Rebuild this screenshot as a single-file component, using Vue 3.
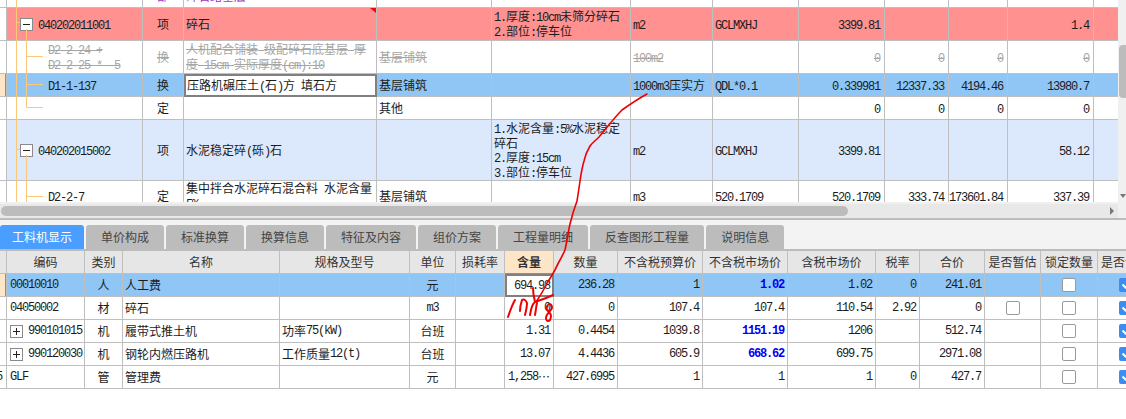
<script setup>
// split a string into latin / cjk runs, the latin part is set tighter to get half width digits
function runs(text) {
  return String(text)
    .split(/([\x20-\x7e]+)/)
    .filter(Boolean)
    .map((s) => ({ s, lat: /^[\x20-\x7e]/.test(s) }))
}

const upperAlign = ['c', 'l', 'l', 'l', 'l', 'l', 'r', 'r', 'r', 'r']

const upperRows = [
  { id: 0, cls: 'clip', h: 8, code: '', cells: ['部', '碎石路基层', '', '', '', '', '', '', '', ''] },
  {
    id: 1, cls: 'red', h: 33, code: '040202011001', box: true, flag: true,
    cells: ['项', '碎石', '', '1.厚度:10cm未筛分碎石\n2.部位:停车位', 'm2', 'GCLMXHJ', '3399.81', '', '', '1.4']
  },
  {
    id: 2, cls: 'off', h: 33, code: 'D2-2-24 +\nD2-2-25 * -5',
    cells: ['换', '人机配合铺装 级配碎石底基层 厚度 15cm  实际厚度(cm):10', '基层铺筑', '', '100m2', '', '0', '0', '0', '0']
  },
  {
    id: 3, cls: 'sel', h: 23, code: 'D1-1-137', edit: true,
    cells: ['换', '压路机碾压土(石)方 填石方', '基层铺筑', '', '1000m3压实方', 'QDL*0.1', '0.339981', '12337.33', '4194.46', '13980.7']
  },
  { id: 4, h: 23, code: '', cells: ['定', '', '其他', '', '', '', '0', '0', '0', '0'] },
  {
    id: 5, cls: 'blue', h: 61, code: '040202015002', box: true,
    cells: ['项', '水泥稳定碎(砾)石', '', '1.水泥含量:5%水泥稳定碎石\n2.厚度:15cm\n3.部位:停车位', 'm2', 'GCLMXHJ', '3399.81', '', '', '58.12']
  },
  {
    id: 6, h: 31, code: 'D2-2-7',
    cells: ['定', '集中拌合水泥碎石混合料 水泥含量 5%', '基层铺筑', '', 'm3', '520.1709', '520.1709', '333.74', '173601.84', '337.39']
  }
]

const tabs = ['工料机显示', '单价构成', '标准换算', '换算信息', '特征及内容', '组价方案', '工程量明细', '反查图形工程量', '说明信息']

const heads = ['编码', '类别', '名称', '规格及型号', '单位', '损耗率', '含量', '数量', '不含税预算价', '不含税市场价', '含税市场价', '税率', '合价', '是否暂估', '锁定数量', '是否计价']

const lowerAlign = ['c', 'l', 'l', 'c', 'l', 'r', 'r', 'r', 'r', 'r', 'r', 'r']

const lowerRows = [
  { id: 1, sel: true, code: '00010010', strong: true, cells: ['人', '人工费', '', '元', '', '694.98', '236.28', '1', '1.02', '1.02', '0', '241.01'] },
  { id: 2, code: '04050002', est: true, cells: ['材', '碎石', '', 'm3', '', '0', '0', '107.4', '107.4', '110.54', '2.92', '0'] },
  { id: 3, code: '990101015', box: true, strong: true, cells: ['机', '履带式推土机', '功率75(kW)', '台班', '', '1.31', '0.4454', '1039.8', '1151.19', '1206', '', '512.74'] },
  { id: 4, code: '990120030', box: true, strong: true, cells: ['机', '钢轮内燃压路机', '工作质量12(t)', '台班', '', '13.07', '4.4436', '605.9', '668.62', '699.75', '', '2971.08'] },
  { id: 5, code: 'GLF', num: '5', cells: ['管', '管理费', '', '元', '', '1,258…', '427.6995', '1', '1', '1', '0', '427.7'] }
]
</script>

<template>
  <div class="page">
    <div class="top">
      <div class="top-main">
        <div class="utable">
          <div
            v-for="row in upperRows"
            :key="row.id"
            class="urow"
            :class="row.cls"
            :style="{ height: row.h + 'px' }"
          >
            <div class="gut"></div>
            <div class="ucell code" :class="{ plain: !row.box }">
              <span v-if="row.box" class="box minus"></span>
              <div class="txt"><span v-for="(r, i) in runs(row.code)" :key="i" :class="{ lat: r.lat }">{{ r.s }}</span></div>
            </div>
            <div
              v-for="(c, n) in row.cells"
              :key="n"
              class="ucell"
              :class="[upperAlign[n], { editing: row.edit && n === 1 }]"
            >
              <div class="txt"><span v-for="(r, i) in runs(c)" :key="i" :class="{ lat: r.lat }">{{ r.s }}</span></div>
              <i v-if="row.flag && n === 1" class="flag"></i>
            </div>
            <div class="ucell tail"></div>
          </div>

          <!-- tree connectors -->
          <svg class="tree" width="50" height="202" viewBox="0 0 50 202">
            <g fill="none" stroke="#fcc878" stroke-width="1">
              <path d="M16.5 0V202M17 22.5H20M17 149.5H20" />
              <path d="M26.5 29V107.5H43M27 56.5H43M27 84.5H43" />
              <path d="M26.5 155V202M27 196.5H43" />
            </g>
          </svg>
        </div>
        <div class="hbar">
          <div class="hthumb"></div>
          <i class="arrow-r"></i>
        </div>
      </div>
      <div class="vbar">
        <div class="vthumb"></div>
        <i class="arrow-d"></i>
      </div>
    </div>

    <div class="tabs">
      <div v-for="(t, i) in tabs" :key="t" class="tab" :class="{ active: i === 0 }">{{ t }}</div>
    </div>

    <div class="lrow head">
      <div class="gut"></div>
      <div v-for="(h, i) in heads" :key="h" class="lcell" :class="{ hot: i === 6, last: i === 15 }">{{ h }}</div>
    </div>
    <div v-for="row in lowerRows" :key="row.id" class="lrow" :class="{ sel: row.sel }">
      <div class="gut"><span v-if="row.num" class="lat">{{ row.num }}</span></div>
      <div class="lcell l code2">
        <span v-if="row.box" class="box plus"></span>
        <span class="lat">{{ row.code }}</span>
      </div>
      <div
        v-for="(c, n) in row.cells"
        :key="n"
        class="lcell"
        :class="[lowerAlign[n], { editing: row.sel && n === 5, strong: row.strong && n === 8 }]"
      >
        <span v-for="(r, i) in runs(c)" :key="i" :class="{ lat: r.lat }">{{ r.s }}</span>
      </div>
      <div class="lcell c"><span v-if="row.est" class="check"></span></div>
      <div class="lcell c"><span class="check"></span></div>
      <div class="lcell last-check">
        <span class="check on">
          <svg width="14" height="14" viewBox="0 0 14 14"><path d="M3.5 6.5L6.5 9.5L10.5 5" fill="none" stroke="#fff" stroke-width="2" /></svg>
        </span>
      </div>
    </div>

    <!-- red marker notes drawn over the screen -->
    <svg class="ink" width="1126" height="419" viewBox="0 0 1126 419">
      <g fill="none" stroke="#f00000" stroke-linecap="round" stroke-linejoin="round">
        <path stroke-width="1.6" d="M647 94C636 100 629 105 622 110C613 119 606 129 599 137C595 141 592 143 590 146C587 151 585 156 584 161C582 168 581 174 580 181C579 188 578 195 577 201C574 209 572 216 570 224C568 233 567 241 565 250C562 257 558 263 555 270C552 275 550 279 547 283C544 290 540 296 536 302" />
        <g stroke-width="2">
          <path d="M533 288C533 293 534 298 535 302C541 300 547 298 553 295" />
          <path d="M508 317C510 311 512 305 515 300" />
          <path d="M520 311C520 307 521 303 522 300C524 299 526 300 527 303C527 307 526 311 525 315" />
          <path d="M530 315C531 309 532 305 534 303" />
          <path d="M535 315C536 310 536 307 537 303" />
          <path d="M549 304C546 306 546 309 548 311C551 314 552 316 550 320C548 322 546 321 546 318C546 314 551 311 552 308C552 305 551 304 549 304Z" />
        </g>
      </g>
    </svg>
  </div>
</template>

<style scoped>
.page {
  position: relative;
  width: 1126px;
  height: 419px;
  overflow: hidden;
  background: #fff;
  color: #1c1c1c;
  font-family: "Noto Sans CJK SC", "Liberation Sans", sans-serif;
  font-size: 12px;
  line-height: 14px;
}
.lat {
  font-family: "Liberation Mono", monospace;
  letter-spacing: -1.2px;
  line-height: 1;
}

/* upper grid */
.top {
  display: flex;
  height: 218px;
}
.top-main {
  flex: 1;
  min-width: 0;
  background: #f0f0f0;
}
.utable {
  position: relative;
  height: 202px;
  overflow: hidden;
  background: #fff;
}
.urow {
  display: grid;
  grid-template-columns: 7px 136px 41px 193px 115px 139px 82px 86px 86px 64px 59px 86px 1fr;
  grid-template-rows: minmax(0, 1fr);
}
.gut {
  display: flex;
  align-items: center;
  overflow: hidden;
  background: #fff;
  border-right: 1px solid #bfbfbf;
  border-bottom: 1px solid #bfbfbf;
}
.gut .lat { margin-left: -4px; }
.ucell {
  position: relative;
  display: flex;
  align-items: center;
  min-width: 0;
  padding: 0 2px;
  border-right: 1px solid #bfbfbf;
  border-bottom: 1px solid #bfbfbf;
}
.ucell.tail { border-right: 0; }
.ucell.c { justify-content: center; }
.ucell.r { justify-content: flex-end; padding-right: 4px; white-space: nowrap; }
.ucell .txt { white-space: pre-line; word-break: break-all; }
.ucell.r .txt { white-space: nowrap; flex: none; }
.ucell.code { padding-left: 13px; gap: 5px; }
.ucell.code.plain { padding-left: 41px; }

.urow.clip .ucell { align-items: flex-end; color: #a032c0; }
.urow.clip .txt { margin-bottom: 4px; }
.urow.red > .ucell { background: #ff9191; }
.urow.blue > .ucell { background: #dce9fc; }
.urow.sel > .ucell { background: #90c6f6; }
.urow.sel > .gut, .lrow.sel > .gut {
  background: #fde5c8;
  box-shadow: inset -1px 0 0 #4a9eff;
}
.urow.off .txt { color: #a6a6a6; }
.urow.off .txt span { text-decoration: line-through; }
.ucell.editing {
  background: #fff !important;
  border: 2px solid #808080;
  padding: 0 1px;
}
.flag {
  position: absolute;
  top: 0;
  right: 0;
  border-top: 5px solid #f00;
  border-left: 6px solid transparent;
}
.tree {
  position: absolute;
  top: 0;
  left: 0;
  pointer-events: none;
}

.box {
  position: relative;
  flex: none;
  width: 13px;
  height: 13px;
  box-sizing: border-box;
  background: #fff;
  border: 1px solid #8a8a8a;
}
.box::before {
  content: "";
  position: absolute;
  left: 2px;
  right: 2px;
  top: 5px;
  height: 1px;
  background: #222;
}
.box.plus::after {
  content: "";
  position: absolute;
  top: 2px;
  bottom: 2px;
  left: 5px;
  width: 1px;
  background: #222;
}

/* scrollbars */
.hbar {
  display: flex;
  align-items: center;
  justify-content: space-between;
  height: 14px;
  margin-top: 2px;
  padding: 0 4px 0 1px;
  background: #e8e8e8;
}
.hthumb {
  width: 847px;
  height: 10px;
  border-radius: 5px;
  background: #bcbcbc;
}
.arrow-r {
  border-left: 4px solid #777;
  border-top: 4px solid transparent;
  border-bottom: 4px solid transparent;
}
.vbar {
  display: flex;
  flex-direction: column;
  align-items: flex-end;
  width: 8px;
  padding-top: 45px;
  box-sizing: border-box;
  background: #f0f0f0;
}
.vthumb {
  width: 7px;
  height: 53px;
  border-radius: 4px 0 0 4px;
  background: #bcbcbc;
}
.arrow-d {
  margin: 96px 0 0;
  border-top: 4px solid #777;
  border-left: 3px solid transparent;
  border-right: 3px solid transparent;
}

/* tabs */
.tabs {
  display: flex;
  gap: 2px;
  height: 33px;
  box-sizing: border-box;
  padding-top: 5px;
  background: #f3f3f3;
  border-top: 2px solid #bcbcbc;
  border-bottom: 2px solid #bcbcbc;
}
.tab {
  height: 24px;
  padding: 0 15px;
  line-height: 24px;
  color: #444;
  background: #bcbcbc;
  border-radius: 3px 3px 0 0;
}
.tab.active {
  padding: 0 12px;
  color: #fff;
  background: #4a9eff;
}

/* lower grid */
.lrow {
  display: grid;
  grid-template-columns: 7px 78px 38px 157px 130px 46px 49px 49px 64px 85px 85px 88px 44px 65px 56px 57px 28px;
  height: 23px;
}
.lcell {
  display: flex;
  align-items: center;
  justify-content: center;
  min-width: 0;
  overflow: hidden;
  white-space: nowrap;
  padding: 0 2px;
  border-right: 1px solid #bfbfbf;
  border-bottom: 1px solid #bfbfbf;
}
.lcell.l { justify-content: flex-start; }
.lcell.r { justify-content: flex-end; padding-right: 3px; }
.lcell.code2 { gap: 5px; padding-left: 3px; }
.lrow.head .lcell, .lrow.head .gut { background: #e6e6e6; }
.lrow.head .lcell { color: #333; }
.lrow.head .lcell.hot {
  background: #fde5c8;
  font-weight: 700;
  border-bottom-color: #4a9eff;
}
.lrow.head .lcell.last {
  justify-content: flex-start;
  padding-left: 3px;
  border-right: 0;
}
.lrow.sel .lcell { background: #90c6f6; }
.lrow .lcell.editing {
  background: #fff;
  border: 2px solid #808080;
  padding-right: 2px;
}
.lcell.strong { color: #0000f0; font-weight: 700; }
.lcell.last-check {
  justify-content: flex-start;
  padding: 0 0 0 21px;
  border-right: 0;
}
.check {
  flex: none;
  width: 14px;
  height: 14px;
  box-sizing: border-box;
  background: #fff;
  border: 1px solid #9a9a9a;
  border-radius: 2px;
}
.check.on {
  background: #3b8df0;
  border: 0;
}
.check svg { display: block; }

.ink {
  position: absolute;
  top: 0;
  left: 0;
  pointer-events: none;
}
</style>

<style>
body { margin: 0; }
</style>
